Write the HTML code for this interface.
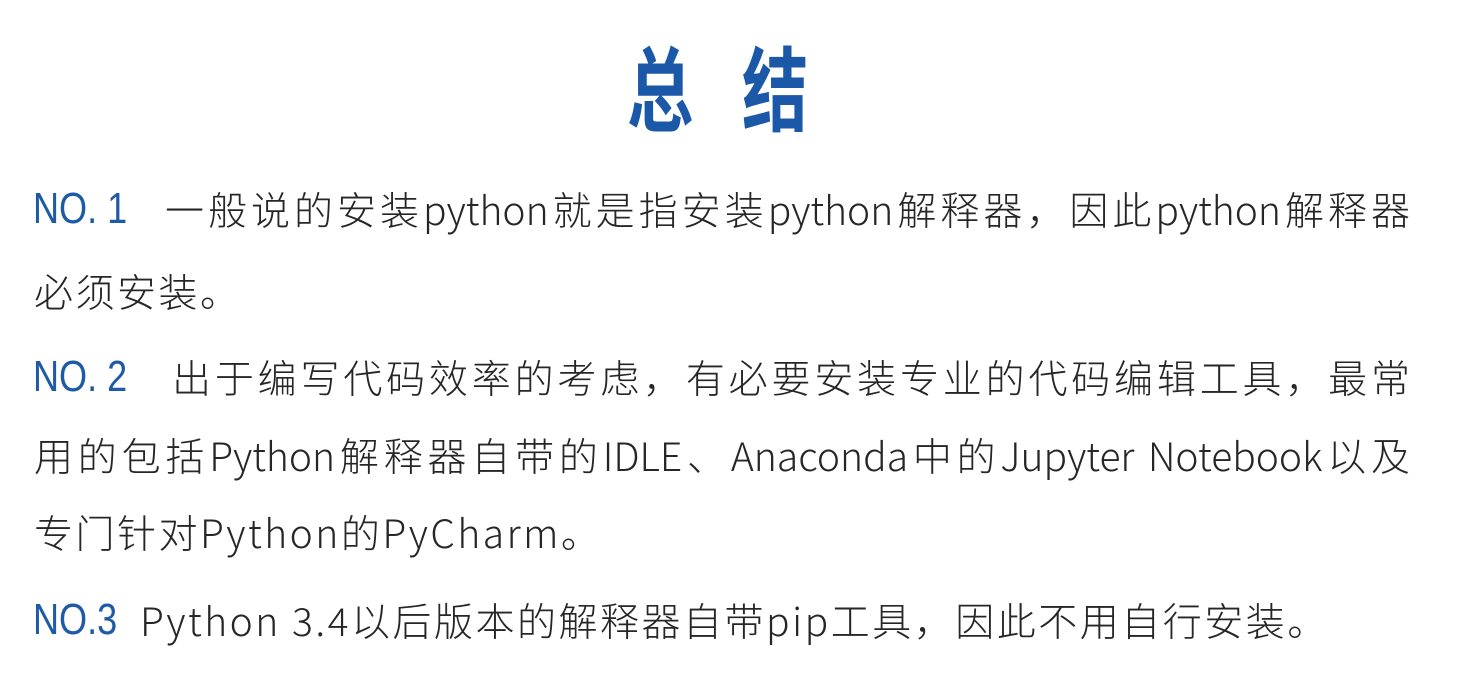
<!DOCTYPE html>
<html><head><meta charset="utf-8"><style>
html,body{margin:0;padding:0;background:#fff;}
body{width:1458px;height:690px;position:relative;overflow:hidden;font-family:"Noto Sans CJK SC",sans-serif;color:#222;}
.t{position:absolute;font-family:"Noto Sans CJK SC",sans-serif;font-weight:700;color:#1c58a8;font-size:92px;line-height:100px;top:35px;transform:scaleX(0.72);transform-origin:left center;}
.l{position:absolute;font-size:39px;line-height:50px;white-space:nowrap;font-family:"Noto Sans CJK SC",sans-serif;font-weight:300;color:#262626;letter-spacing:2.5px;}
.j{text-align:justify;text-align-last:justify;white-space:normal;letter-spacing:0;}
.n{position:absolute;color:#1e5aa6;font-size:44px;line-height:50px;font-family:"Liberation Sans",sans-serif;transform:scaleX(0.82);transform-origin:left center;white-space:nowrap;}
</style></head><body>
<div class="t" style="left:627px">总</div>
<div class="t" style="left:742px">结</div>

<div class="n" style="left:33px;top:184px">NO. 1</div>
<div class="l j" style="left:165px;top:184px;width:1245px">一般说的安装python就是指安装python解释器，因此python解释器</div>
<div class="l" style="left:34px;top:266px">必须安装。</div>

<div class="n" style="left:33px;top:352px">NO. 2</div>
<div class="l j" style="left:172px;top:352px;width:1238px">出于编写代码效率的考虑，有必要安装专业的代码编辑工具，最常</div>
<div class="l j" style="left:34px;top:430px;width:1376px">用的包括Python解释器自带的IDLE、Anaconda中的Jupyter Notebook以及</div>
<div class="l" style="left:34px;top:507px">专门针对Python的PyCharm。</div>

<div class="n" style="left:33px;top:595px">NO.3</div>
<div class="l" style="left:140px;top:595px">Python 3.4以后版本的解释器自带pip工具，因此不用自行安装。</div>
</body></html>
